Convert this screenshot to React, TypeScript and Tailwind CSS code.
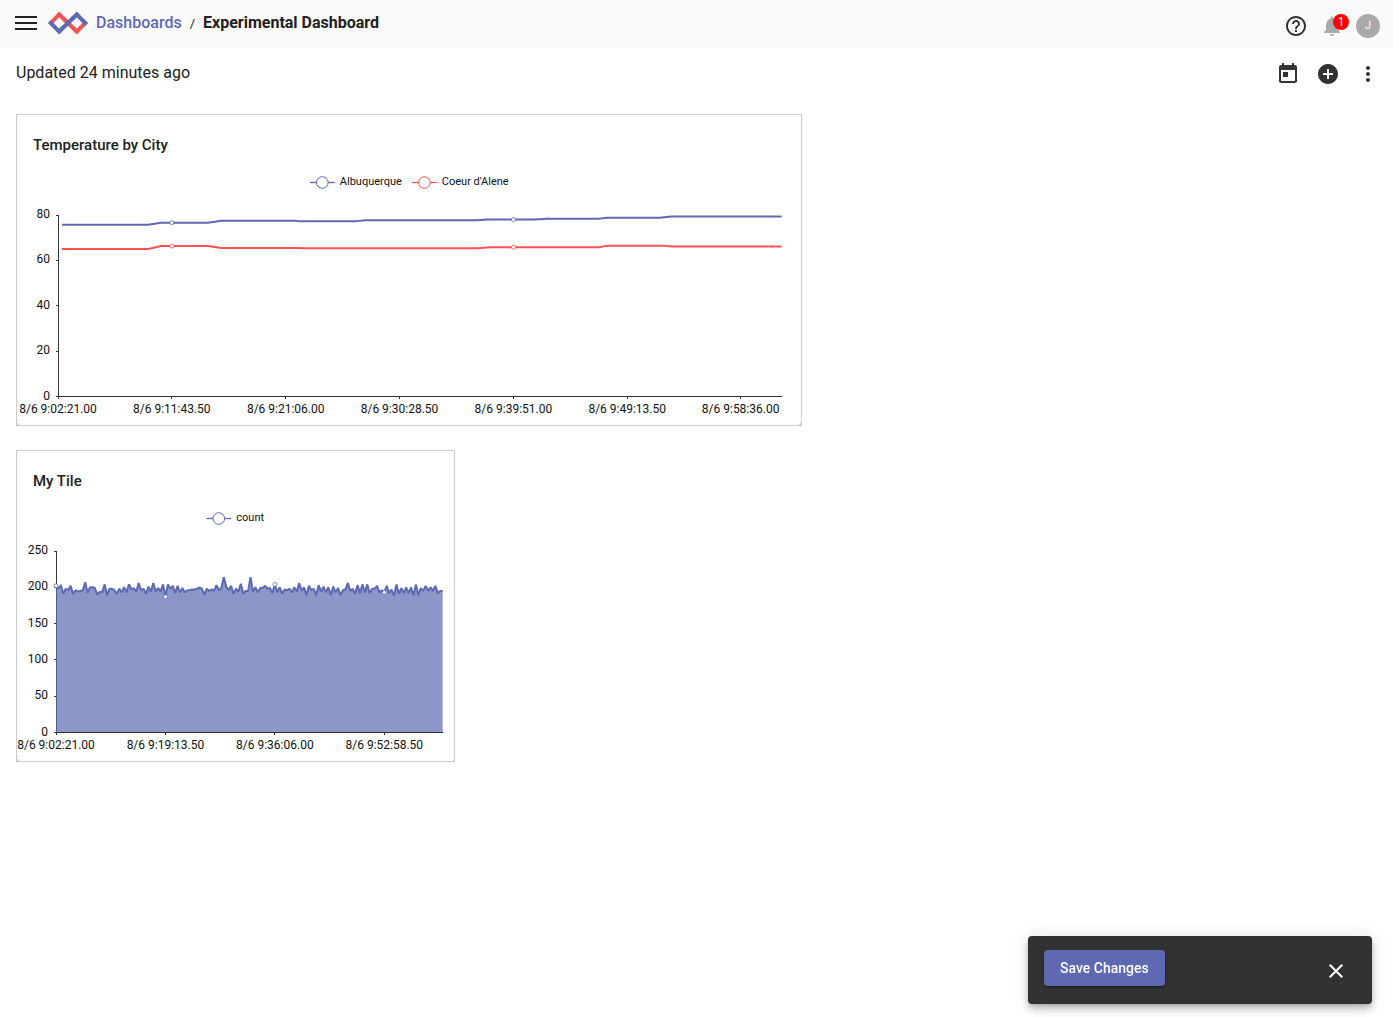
import { useLayoutEffect, useRef, useState, type ReactNode } from "react";
import { MdAddCircle, MdClose, MdHelpOutline, MdMoreVert, MdNotifications, MdToday } from "react-icons/md";

type Point = [number, number];

type Series = { name: string; color: string; points: Point[]; markers: Point[]; filled?: boolean };

type ChartProps = {
  label: string;
  series: Series[];
  legend: { x: number; name: string; color: string }[];
  yMax: number;
  yTicks: number[];
  xMax: number;
  xTicks: { at: number; text: string }[];
  left: number;
  right: number;
};

const BLUE = "#5d69b1";
const RED = "#ff5252";
const TOP = 52;
const BOTTOM = 233.5;

const albuquerque: Point[] = [
  [4, 75.7], [90, 75.7], [103, 76.6], [150, 76.6], [163, 77.5], [237, 77.5], [240, 77.3], [298, 77.3],
  [307, 77.7], [419, 77.7], [429, 78], [476, 78], [489, 78.4], [541, 78.4], [549, 78.8], [601, 78.8],
  [613, 79.3], [723, 79.3],
];

const coeurDAlene: Point[] = [
  [4, 65], [90, 65], [103, 66.3], [150, 66.3], [163, 65.5], [238, 65.5], [245, 65.3], [419, 65.3],
  [431, 65.8], [541, 65.8], [549, 66.5], [603, 66.5], [614, 66.1], [723, 66.1],
];

const counts = [
  202, 198, 203, 191, 198, 196, 202, 191, 196, 194, 195, 196, 207, 192, 200, 200, 199, 190, 194, 193,
  204, 189, 198, 198, 196, 191, 198, 193, 200, 193, 204, 197, 199, 194, 206, 196, 198, 191, 201, 194,
  206, 194, 199, 194, 204, 187, 204, 198, 202, 192, 202, 193, 199, 193, 196, 196, 197, 197, 198, 200,
  198, 190, 198, 195, 197, 195, 203, 196, 199, 214, 201, 196, 202, 191, 198, 194, 205, 191, 195, 195,
  214, 194, 200, 193, 199, 199, 202, 198, 199, 192, 204, 193, 200, 191, 197, 196, 198, 193, 200, 194,
  206, 195, 200, 189, 202, 196, 198, 189, 203, 194, 201, 193, 200, 189, 201, 193, 199, 189, 196, 197,
  206, 195, 198, 191, 203, 192, 204, 193, 204, 192, 198, 198, 202, 193, 196, 193, 202, 192, 197, 188,
  204, 191, 199, 192, 200, 192, 200, 189, 204, 189, 199, 195, 202, 195, 200, 195, 202, 192, 195, 195,
];

const countPoints = counts.map((value, index): Point => [index, value]);

function Chart({ label, series, legend, yMax, yTicks, xMax, xTicks, left, right }: ChartProps) {
  const box = useRef<HTMLDivElement>(null);
  const [width, setWidth] = useState(0);

  useLayoutEffect(() => {
    const node = box.current;
    if (!node) return;
    const measure = () => setWidth(node.getBoundingClientRect().width);
    measure();
    const observer = new ResizeObserver(measure);
    observer.observe(node);
    return () => observer.disconnect();
  }, []);

  const plotRight = width - right;
  const x = (value: number) => left + (value / xMax) * (plotRight - left);
  const y = (value: number) => BOTTOM - (value / yMax) * (BOTTOM - TOP);
  const crisp = (value: number) => Math.floor(value) + 0.5;
  const trace = (points: Point[]) => points.map(([px, py]) => `${x(px)},${y(py)}`).join(" ");
  const centre = width / 2;

  return (
    <div ref={box} className="h-[262px] w-full">
      {width > 0 && (
        <svg role="img" aria-label={label} width={width} height={262} className="block overflow-hidden">
          {legend.map((entry) => (
            <g key={entry.name}>
              <path d={`M${centre + entry.x} 19.5h25`} stroke={entry.color} strokeWidth={1.3} />
              <circle cx={centre + entry.x + 12.5} cy={19.5} r={5.8} fill="#fff" stroke={entry.color} />
              <text x={centre + entry.x + 30} y={22} className="fill-[#111] text-[11px]">
                {entry.name}
              </text>
            </g>
          ))}

          <g stroke="#333" strokeWidth={1} fill="none">
            <path d={`M${crisp(left)} ${TOP}V${BOTTOM + 2.5}`} />
            <path d={`M${crisp(left)} ${BOTTOM}H${plotRight + 0.5}`} />
            {yTicks.map((tick) => (
              <path key={tick} d={`M${crisp(left) - 2.5} ${crisp(y(tick))}h2`} />
            ))}
            {xTicks.map((tick) => (
              <path key={tick.text} d={`M${crisp(x(tick.at))} ${BOTTOM + 0.5}v2`} />
            ))}
          </g>

          {series.map((line) => (
            <g key={line.name}>
              {line.filled && (
                <polygon
                  points={`${left},${BOTTOM - 0.5} ${trace(line.points)} ${plotRight},${BOTTOM - 0.5}`}
                  fill={line.color}
                  opacity={0.7}
                />
              )}
              <polyline points={trace(line.points)} fill="none" stroke={line.color} strokeWidth={2} strokeLinejoin="bevel" />
              {line.markers.map(([px, py]) => (
                <circle key={px} cx={x(px)} cy={y(py)} r={2} fill="#fff" stroke={line.color} strokeWidth={0.8} />
              ))}
            </g>
          ))}

          <g className="fill-[#111] text-[12px]">
            {yTicks.map((tick) => (
              <text key={tick} x={left - 8} y={y(tick) + 3} textAnchor="end">
                {tick}
              </text>
            ))}
            {xTicks.map((tick) => (
              <text key={tick.text} x={x(tick.at)} y={BOTTOM + 16.5} textAnchor="middle">
                {tick.text}
              </text>
            ))}
          </g>
        </svg>
      )}
    </div>
  );
}

function Tile({ title, className, children }: { title: string; className: string; children: ReactNode }) {
  return (
    <section className={`relative border border-[#ccc] bg-white ${className}`}>
      <h2 className="h-12 px-4 pt-5 text-[15px] leading-5 font-medium text-[#212121]">
        {title}
      </h2>
      {children}
      <span className="absolute bottom-0 left-0 size-0.5 bg-linear-to-tr from-[#ccc] from-50% to-transparent to-50%" />
      <span className="absolute right-0 bottom-0 size-0.5 bg-linear-to-tl from-[#ccc] from-50% to-transparent to-50%" />
    </section>
  );
}

function Logo() {
  return (
    <svg width="40" height="24" viewBox="0 0 40 24" fill="none" strokeWidth="4.2" aria-hidden="true">
      <path d="M1.5 13.4 11.2 3.4 28.8 20.6 38.5 10.6" stroke="#f05555" />
      <path d="M1.5 10.6 11.2 20.6 28.8 3.4 38.5 13.4" stroke="#5d69b1" />
    </svg>
  );
}

export default function App() {
  return (
    <div className="min-h-screen bg-white font-['Roboto',sans-serif] text-[#212121]">
      <header className="flex h-12 items-center bg-[#fafafa] pr-[13px] pl-[15px]">
        <div className="flex items-center pb-0.5">
          <button aria-label="Menu" className="flex h-[14px] w-[22px] flex-col justify-between">
            <span className="h-0.5 w-full bg-[#212121]" />
            <span className="h-0.5 w-full bg-[#212121]" />
            <span className="h-0.5 w-full bg-[#212121]" />
          </button>
          <a href="#home" aria-label="Home" className="ml-[11px]">
            <Logo />
          </a>
          <nav aria-label="Breadcrumb" className="ml-2 flex items-baseline text-base leading-6">
            <a href="#dashboards" className="font-medium text-[#5d69b1]">Dashboards</a>
            <span className="mx-2 text-[13px]">/</span>
            <h1 className="font-bold">Experimental Dashboard</h1>
          </nav>
        </div>
        <div className="ml-auto flex items-center gap-3 pt-1">
          <button aria-label="Help" className="text-[#333]">
            <MdHelpOutline className="size-6" />
          </button>
          <button aria-label="Notifications" className="relative text-[#aaa]">
            <MdNotifications className="size-6" />
            <span className="absolute top-0 -right-[5px] flex size-4 items-center justify-center rounded-full bg-[red] text-[12px] leading-4 text-white">
              1
            </span>
          </button>
          <button aria-label="Account" className="flex size-6 items-center justify-center rounded-full bg-[#aaa] text-[11px] text-white">
            J
          </button>
        </div>
      </header>

      <main>
        <div className="flex items-center justify-between pt-3 pr-[13px] pl-4">
          <p className="text-base leading-6">Updated 24 minutes ago</p>
          <div className="flex items-center gap-4 pt-0.5 text-[#333]">
            <button aria-label="Time range"><MdToday className="size-6" /></button>
            <button aria-label="Add tile"><MdAddCircle className="size-6" /></button>
            <button aria-label="More options"><MdMoreVert className="size-6" /></button>
          </div>
        </div>

        <div className="mt-7 grid grid-cols-12 gap-6 pr-[13px] pl-4">
          <Tile title="Temperature by City" className="col-span-7">
            <Chart
              label="Temperature by City"
              left={41}
              right={19}
              xMax={723}
              yMax={80}
              yTicks={[0, 20, 40, 60, 80]}
              xTicks={[
                { at: 0, text: "8/6 9:02:21.00" },
                { at: 113.7, text: "8/6 9:11:43.50" },
                { at: 227.5, text: "8/6 9:21:06.00" },
                { at: 341.2, text: "8/6 9:30:28.50" },
                { at: 455, text: "8/6 9:39:51.00" },
                { at: 568.7, text: "8/6 9:49:13.50" },
                { at: 682, text: "8/6 9:58:36.00" },
              ]}
              legend={[
                { x: -99, name: "Albuquerque", color: BLUE },
                { x: 3, name: "Coeur d'Alene", color: RED },
              ]}
              series={[
                { name: "Albuquerque", color: BLUE, points: albuquerque, markers: [[113.7, 76.6], [455, 78]] },
                { name: "Coeur d'Alene", color: RED, points: coeurDAlene, markers: [[113.7, 66.3], [455, 65.8]] },
              ]}
            />
          </Tile>
          <Tile title="My Tile" className="col-span-4 col-start-1">
            <Chart
              label="My Tile"
              left={39}
              right={11}
              xMax={159}
              yMax={250}
              yTicks={[0, 50, 100, 150, 200, 250]}
              xTicks={[
                { at: 0, text: "8/6 9:02:21.00" },
                { at: 45, text: "8/6 9:19:13.50" },
                { at: 90, text: "8/6 9:36:06.00" },
                { at: 135, text: "8/6 9:52:58.50" },
              ]}
              legend={[{ x: -29, name: "count", color: BLUE }]}
              series={[
                {
                  name: "count",
                  color: BLUE,
                  filled: true,
                  points: countPoints,
                  markers: [[0, 202], [45, 187], [90, 204], [135, 193]],
                },
              ]}
            />
          </Tile>
        </div>
      </main>

      <div
        role="status"
        className="fixed right-[21px] bottom-[13px] flex w-[344px] items-center justify-between rounded bg-[#323232] pt-[14px] pr-6 pb-[18px] pl-4 shadow-[0_3px_5px_-1px_rgba(0,0,0,0.2),0_6px_10px_0_rgba(0,0,0,0.14),0_1px_18px_0_rgba(0,0,0,0.12)]"
      >
        <button className="h-9 rounded bg-[#5d69b1] px-4 text-sm font-medium text-white shadow-[0_3px_1px_-2px_rgba(0,0,0,0.2),0_2px_2px_0_rgba(0,0,0,0.14),0_1px_5px_0_rgba(0,0,0,0.12)]">
          Save Changes
        </button>
        <button aria-label="Dismiss" className="pt-1.5 text-white">
          <MdClose className="size-6" />
        </button>
      </div>
    </div>
  );
}
